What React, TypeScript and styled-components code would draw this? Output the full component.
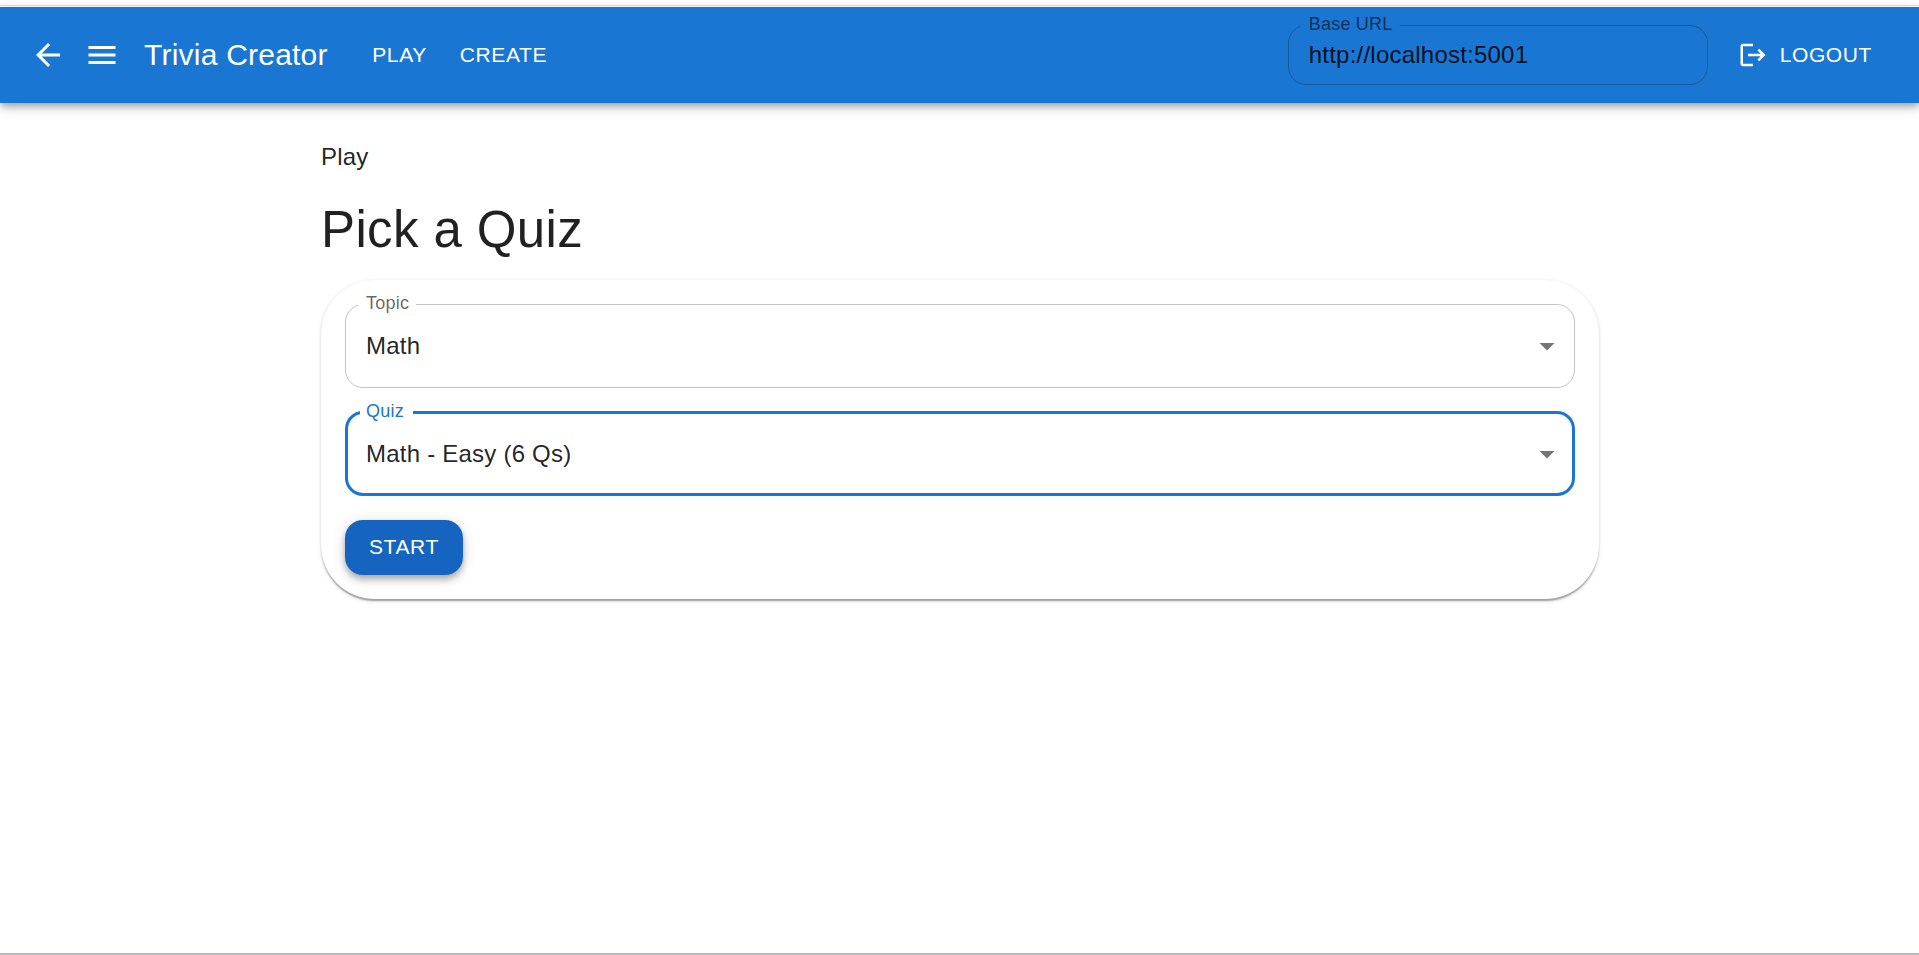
import React from "react";
import styled, { createGlobalStyle } from "styled-components";
import { MdArrowBack, MdMenu, MdLogout, MdArrowDropDown } from "react-icons/md";

const GlobalStyle = createGlobalStyle`
  *, *::before, *::after { box-sizing: border-box; }
  body {
    margin: 0;
    background: #fff;
    color: rgba(0, 0, 0, 0.87);
    font: 400 24px/1.5 "Liberation Sans", Arial, sans-serif;
    letter-spacing: 0.00938em;
  }
`;

const Page = styled.div`
  display: flex;
  flex-direction: column;
  height: 955px;
  padding-top: 5px;
  border-bottom: 2px solid #b6bbc1;
  overflow: hidden;
`;

const TopRule = styled.div`
  flex: none;
  height: 2px;
  border-top: 1px solid #dfdfdf;
`;

const AppBar = styled.header`
  flex: none;
  display: flex;
  align-items: center;
  height: 96px;
  padding: 0 35px 0 36px;
  color: #fff;
  background: #1976d2;
  box-shadow: 0 3px 6px -1.5px rgba(0, 0, 0, 0.2), 0 6px 7.5px rgba(0, 0, 0, 0.14),
    0 1.5px 15px rgba(0, 0, 0, 0.12);
`;

const IconButton = styled.button`
  display: flex;
  padding: 0;
  border: 0;
  color: inherit;
  background: none;
  font-size: 36px;
`;

const NavIcons = styled.div`
  display: flex;
  gap: 18px;
  margin-left: -6px;
`;

const Brand = styled.div`
  margin: 0 32.5px 0 24px;
  font-size: 30px;
  line-height: 48px;
  letter-spacing: 0.0075em;
`;

const TextButton = styled.button`
  display: flex;
  align-items: center;
  padding: 9px 12px;
  border: 0;
  color: inherit;
  background: none;
  font: 400 21px/36px "Liberation Sans", Arial, sans-serif;
  letter-spacing: 0.02857em;
  text-transform: uppercase;
`;

const Nav = styled.nav`
  display: flex;
  gap: 9px;
  flex: 1;
`;

const LogoutButton = styled(TextButton)`
  gap: 12px;
  margin-left: 18px;
  svg { font-size: 30px; }
`;

const FieldRoot = styled.div<{ $small?: boolean }>`
  position: relative;
  display: flex;
  align-items: center;
  justify-content: space-between;
  width: ${(p) => (p.$small ? "420px" : "100%")};
  height: ${(p) => (p.$small ? 60 : 84)}px;
  padding: 0 10px 0 21px;
  color: rgba(0, 0, 0, 0.87);
`;

const Outline = styled.span<{ $focused?: boolean; $from: number; $to: number }>`
  position: absolute;
  inset: ${(p) => (p.$focused ? "-1px 0 0" : "0")};
  border: ${(p) => (p.$focused ? "3px solid #1976d2" : "1px solid rgba(0, 0, 0, 0.23)")};
  border-radius: 18px;
  clip-path: polygon(
    0 0, ${(p) => p.$from}px 0, ${(p) => p.$from}px 8px,
    ${(p) => p.$to}px 8px, ${(p) => p.$to}px 0,
    100% 0, 100% 100%, 0 100%
  );
`;

const Label = styled.label<{ $focused?: boolean }>`
  position: absolute;
  left: 21px;
  top: -14px;
  font-size: 18px;
  line-height: 26px;
  color: ${(p) => (p.$focused ? "#1976d2" : "rgba(0, 0, 0, 0.6)")};
`;

const Arrow = styled(MdArrowDropDown)`
  font-size: 36px;
  color: rgba(0, 0, 0, 0.54);
`;

const Content = styled.main`
  display: flex;
  flex-direction: column;
  width: 1278px;
  margin: 36px 320px 0 321px;
`;

const Heading = styled.h1`
  margin: 23px 0 19px;
  font-size: 51px;
  font-weight: 400;
  line-height: 63px;
  letter-spacing: 0.00735em;
`;

const Card = styled.section`
  display: flex;
  flex-direction: column;
  align-items: flex-start;
  gap: 24px;
  padding: 24px;
  border-radius: 54px;
  background: #fff;
  box-shadow: 0 3px 1.5px -1.5px rgba(0, 0, 0, 0.2), 0 1.5px 1.5px rgba(0, 0, 0, 0.14),
    0 1.5px 4.5px rgba(0, 0, 0, 0.12);
`;

const StartButton = styled(TextButton)`
  padding: 9px 24px 10px;
  color: #fff;
  background: #1565c0;
  border-radius: 18px;
  box-shadow: 0 3px 6px -1.5px rgba(0, 0, 0, 0.2), 0 6px 7.5px rgba(0, 0, 0, 0.14),
    0 1.5px 15px rgba(0, 0, 0, 0.12);
`;

type OutlinedFieldProps = {
  label: string;
  value: string;
  notch: [number, number];
  small?: boolean;
  focused?: boolean;
};

function OutlinedField({ label, value, notch, small, focused }: OutlinedFieldProps) {
  return (
    <FieldRoot $small={small}>
      <Outline $focused={focused} $from={notch[0]} $to={notch[1]} />
      <Label $focused={focused}>{label}</Label>
      <span>{value}</span>
      {!small && <Arrow />}
    </FieldRoot>
  );
}

export default function App() {
  return (
    <Page>
      <GlobalStyle />
      <TopRule />
      <AppBar>
        <NavIcons>
          <IconButton aria-label="Back"><MdArrowBack /></IconButton>
          <IconButton aria-label="Menu"><MdMenu /></IconButton>
        </NavIcons>
        <Brand>Trivia Creator</Brand>
        <Nav>
          <TextButton>Play</TextButton>
          <TextButton>Create</TextButton>
        </Nav>
        <OutlinedField small label="Base URL" value="http://localhost:5001" notch={[13, 112]} />
        <LogoutButton><MdLogout />Logout</LogoutButton>
      </AppBar>
      <Content>
        <div>Play</div>
        <Heading>Pick a Quiz</Heading>
        <Card>
          <OutlinedField label="Topic" value="Math" notch={[13, 71]} />
          <OutlinedField focused label="Quiz" value="Math - Easy (6 Qs)" notch={[15, 68]} />
          <StartButton>Start</StartButton>
        </Card>
      </Content>
    </Page>
  );
}
